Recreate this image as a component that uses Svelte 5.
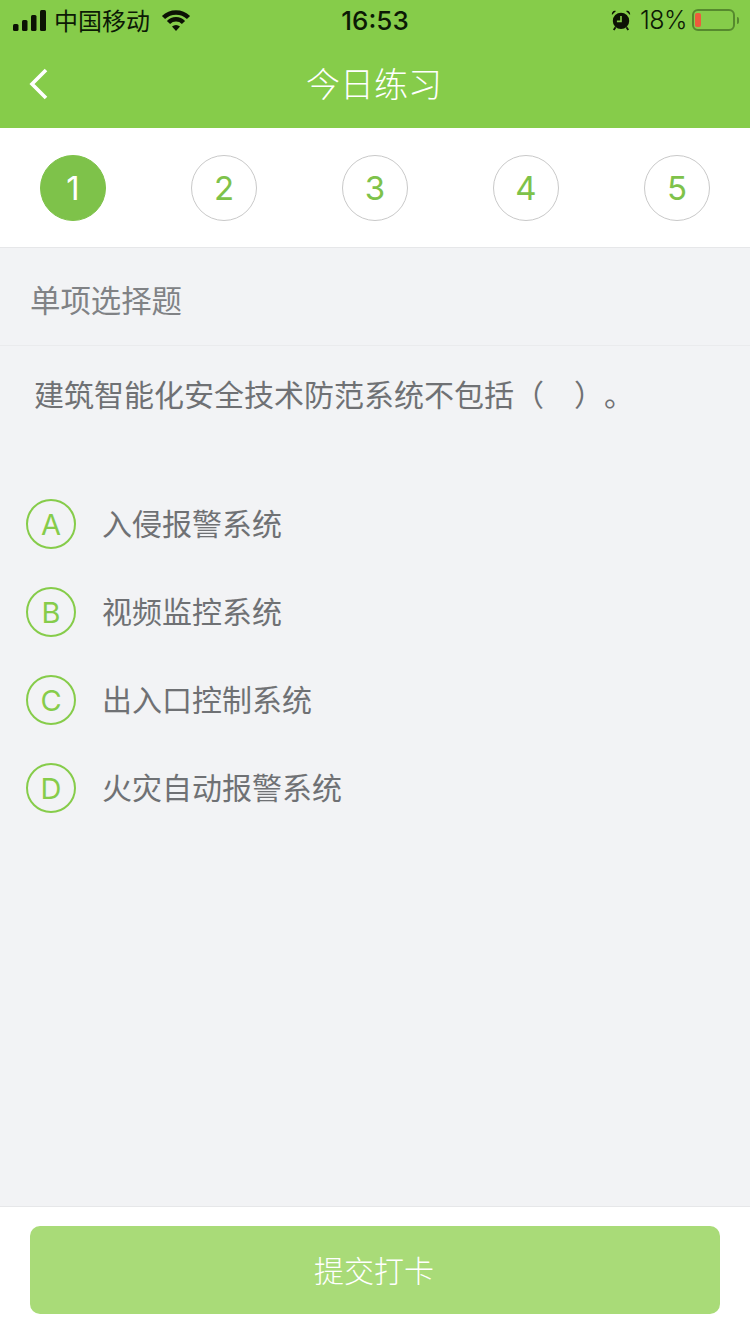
<script>
  const steps = [1, 2, 3, 4, 5];
  const options = [
    { key: "A", text: "入侵报警系统" },
    { key: "B", text: "视频监控系统" },
    { key: "C", text: "出入口控制系统" },
    { key: "D", text: "火灾自动报警系统" }
  ];
</script>

<div class="page">
  <header>
    <div class="status">
      <div class="status-left">
        <svg class="signal" width="34" height="21" viewBox="0 0 34 21">
          <rect x="0" y="14" width="5.500" height="7" rx="1.500" />
          <rect x="9" y="10" width="5.500" height="11" rx="1.500" />
          <rect x="18" y="5" width="5.500" height="16" rx="1.500" />
          <rect x="27" y="0" width="6" height="21" rx="1.500" />
        </svg>
        <span class="carrier">中国移动</span>
        <svg class="wifi" width="30" height="22" viewBox="0 0 30 22">
          <path class="arc" d="M2.500 8.500A18 18 0 0 1 27.500 8.500" />
          <path class="arc" d="M7.500 13.500A10.500 10.500 0 0 1 22.500 13.500" />
          <path d="M11 17.500A6 6 0 0 1 19 17.500L15 22z" />
        </svg>
      </div>
      <span class="clock">16:53</span>
      <div class="status-right">
        <svg class="alarm" width="20" height="22" viewBox="0 0 22 24">
          <circle cx="11" cy="13" r="9" />
          <path d="M1 6.500 5.500 2.200C3.400.8.400 2.800 1 6.500zM21 6.500 16.500 2.200C18.600.8 21.600 2.800 21 6.500z" />
          <path class="feet" d="M5 20 3 23M17 20l2 3" />
          <path class="hands" d="M11 7.500V13.500H6.500" />
        </svg>
        <span class="percent">18%</span>
        <div class="battery">
          <div class="battery-level"></div>
        </div>
        <div class="battery-tip"></div>
      </div>
    </div>
    <div class="nav">
      <svg class="back" width="20" height="32" viewBox="0 0 20 32">
        <path d="M17 2 3 16l14 14" />
      </svg>
      <h1>今日练习</h1>
    </div>
  </header>

  <div class="steps">
    {#each steps as step, i}
      <div class="step" class:active={i === 0}>{step}</div>
    {/each}
  </div>

  <main>
    <div class="type">单项选择题</div>
    <p class="question">建筑智能化安全技术防范系统不包括（　）。</p>
    <ul>
      {#each options as opt}
        <li>
          <span class="letter">{opt.key}</span>
          <span class="text">{opt.text}</span>
        </li>
      {/each}
    </ul>
  </main>

  <footer>
    <button>提交打卡</button>
  </footer>
</div>

<style>
:global(body) {
  margin: 0;
}
.page {
  display: flex;
  flex-direction: column;
  height: 1334px;
  overflow: hidden;
  background: #f2f3f5;
  font-family: "Liberation Sans", "Noto Sans CJK SC", sans-serif;
}
header {
  height: 128px;
  background: #86cc4a;
}
.status {
  display: flex;
  align-items: center;
  justify-content: space-between;
  height: 40px;
  padding: 0 11px 0 13px;
  position: relative;
  color: #0c1a05;
}
.status-left,
.status-right {
  display: flex;
  align-items: center;
}
.signal {
  fill: #0c1204;
}
.carrier {
  font-size: 24px;
  margin-left: 7px;
  padding-bottom: 2px;
  font-family: "Noto Sans CJK SC", sans-serif;
}
.wifi {
  fill: #0c1204;
  margin-left: 11px;
}
.arc {
  fill: none;
  stroke: #0c1204;
  stroke-width: 4.500;
}
.clock {
  position: absolute;
  left: 0;
  right: 0;
  text-align: center;
  font-size: 26px;
  font-weight: 500;
  font-family: Inter, sans-serif;
}
.alarm {
  fill: #0c1204;
  margin-right: 9px;
}
.feet {
  stroke: #0c1204;
  stroke-width: 2;
  fill: none;
}
.hands {
  stroke: #86cc4a;
  stroke-width: 1.800;
  fill: none;
}
.percent {
  font-size: 25px;
  letter-spacing: -0.500px;
  font-family: Inter, sans-serif;
  font-weight: 300;
}
.battery {
  box-sizing: border-box;
  width: 43px;
  height: 22px;
  margin-left: 5px;
  padding: 2px 1px;
  border: 2px solid #56892e;
  border-radius: 6px;
}
.battery-level {
  width: 6px;
  height: 100%;
  background: #ee5b3c;
  border-radius: 2px;
}
.battery-tip {
  width: 2px;
  height: 7px;
  margin-left: 2px;
  background: #56892e;
  border-radius: 0 2px 2px 0;
}
.nav {
  display: flex;
  align-items: center;
  justify-content: center;
  height: 88px;
  padding-right: 2px;
  position: relative;
}
.back {
  position: absolute;
  left: 29px;
  top: 28px;
  fill: none;
  stroke: #fff;
  stroke-width: 3.600;
}
h1 {
  margin: 0 0 4px;
  color: #fff;
  font-size: 34px;
  font-weight: 300;
}
.steps {
  display: flex;
  justify-content: space-between;
  align-items: center;
  height: 119px;
  padding: 0 40px;
  background: #fff;
  border-bottom: 1px solid #e6e7e9;
}
.step {
  box-sizing: border-box;
  display: flex;
  align-items: center;
  justify-content: center;
  width: 66px;
  height: 66px;
  border: 1px solid #c9c9c9;
  border-radius: 50%;
  color: #7ec24a;
  font-size: 33px;
  font-family: Inter, sans-serif;
}
.step.active {
  background: #7ec24a;
  border-color: #7ec24a;
  color: #fff;
}
main {
  flex: 1;
}
.type {
  box-sizing: border-box;
  display: flex;
  align-items: center;
  height: 98px;
  padding: 4px 0 0 30px;
  border-bottom: 1px solid #eaebed;
  color: #808285;
  font-size: 30.400px;
}
.question {
  margin: 0;
  padding: 27px 0 0 34px;
  color: #6f7174;
  font-size: 30px;
  line-height: 46px;
  text-spacing-trim: space-all;
}
ul {
  list-style: none;
  margin: 0;
  padding: 80px 0 0 26px;
}
li {
  display: flex;
  align-items: center;
  height: 50px;
  margin-bottom: 38px;
}
.letter {
  box-sizing: border-box;
  display: flex;
  align-items: center;
  justify-content: center;
  width: 50px;
  height: 50px;
  border: 2px solid #86cc4a;
  border-radius: 50%;
  color: #86cc4a;
  font-size: 29px;
  font-family: Inter, sans-serif;
}
.text {
  margin-left: 26px;
  padding-bottom: 4px;
  color: #6f7174;
  font-size: 30px;
}
footer {
  box-sizing: border-box;
  height: 128px;
  padding: 19px 30px 0;
  background: #fff;
  border-top: 1px solid #e6e7e9;
}
button {
  display: block;
  width: 100%;
  height: 88px;
  padding: 0 2px 3px 0;
  border: 0;
  border-radius: 10px;
  background: #a9db78;
  color: #fff;
  font-size: 30px;
  font-weight: 300;
  font-family: inherit;
}
</style>
